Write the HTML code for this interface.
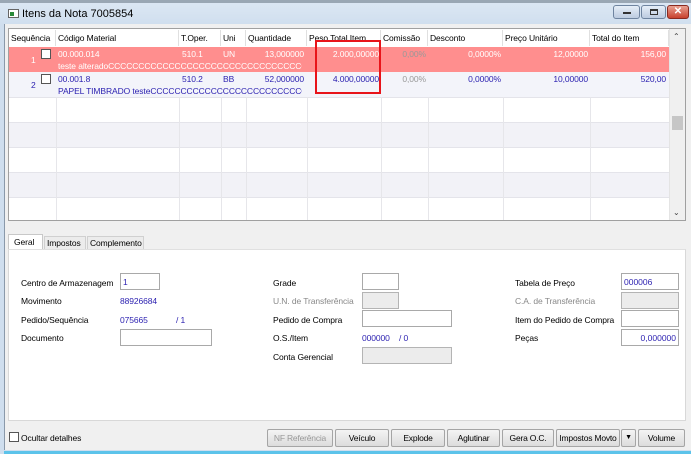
<!DOCTYPE html>
<html><head><meta charset="utf-8"><style>
*{margin:0;padding:0;box-sizing:border-box}
body{width:691px;height:454px;overflow:hidden;background:#cfdcea;font-family:"Liberation Sans",sans-serif;font-size:8.5px;color:#000;position:relative}
.a{position:absolute}
.t{position:absolute;white-space:nowrap;font-size:8.5px;letter-spacing:-0.1px}
.hdr{position:absolute;top:30px;height:16px;border-right:1px solid #e0e0e0;padding:3px 2px;white-space:nowrap;font-size:8.5px;letter-spacing:-0.1px;background:#fff;overflow:hidden}
.vl{position:absolute;width:1px;background:#e6e6ea}
.inp{position:absolute;border:1px solid #a9a9a9;background:#fff;height:17px;font-size:8.5px;color:#2a1fb0;padding:3px 2px;white-space:nowrap}
.dis{background:#ececec;border-color:#b4b4b4}
.btn{position:absolute;top:429px;height:18px;border:1px solid #a5a5a5;background:linear-gradient(#f4f4f4,#dcdcdc);font-size:8.5px;letter-spacing:-0.2px;text-align:center;line-height:16px;border-radius:2px;white-space:nowrap;overflow:hidden}
.blue{color:#2a1fb0}
</style></head><body>
<div class="a" style="left:0;top:0;width:691px;height:454px;background:linear-gradient(#dde8f4,#cfdeee 26px,#cfdeee)"></div>
<div class="a" style="left:0;top:0;width:691px;height:3px;background:#9aa7b4"></div>
<div class="a" style="left:8px;top:9px;width:11px;height:9px;border:1px solid #666;background:#fff"><div class="a" style="left:1px;top:2px;width:4px;height:4px;background:#2a8a3a"></div></div>
<div class="t" style="left:22px;top:8px;font-size:11px;color:#000;letter-spacing:0">Itens da Nota 7005854</div>
<div class="a" style="left:613px;top:5px;width:27px;height:14px;border:1px solid #6f84a0;border-radius:3px;background:linear-gradient(#e6eef8,#bccbe0)"><div class="a" style="left:9px;top:6px;width:8px;height:2px;background:#333"></div></div>
<div class="a" style="left:641px;top:5px;width:25px;height:14px;border:1px solid #6f84a0;border-radius:3px;background:linear-gradient(#e6eef8,#bccbe0)"><div class="a" style="left:8px;top:3px;width:8px;height:6px;border:1px solid #333;border-top-width:2px"></div></div>
<div class="a" style="left:667px;top:5px;width:22px;height:14px;border:1px solid #8a2a20;border-radius:3px;background:linear-gradient(#e8a090,#c8412e);color:#fff;font-weight:bold;font-size:10px;text-align:center;line-height:12px">✕</div>
<div class="a" style="left:4px;top:24px;width:687px;height:426px;background:#f0f0f0;border-left:1px solid #8a99aa"></div>
<div class="a" style="left:8px;top:28px;width:678px;height:193px;border:1px solid #a0a0a0;background:#fff"></div>
<div class="hdr" style="left:9px;width:47px">Sequência</div>
<div class="hdr" style="left:56px;width:123px">Código Material</div>
<div class="hdr" style="left:179px;width:42px">T.Oper.</div>
<div class="hdr" style="left:221px;width:25px">Uni</div>
<div class="hdr" style="left:246px;width:61px">Quantidade</div>
<div class="hdr" style="left:307px;width:74px">Peso Total Item</div>
<div class="hdr" style="left:381px;width:47px">Comissão</div>
<div class="hdr" style="left:428px;width:75px">Desconto</div>
<div class="hdr" style="left:503px;width:87px">Preço Unitário</div>
<div class="hdr" style="left:590px;width:79px">Total do Item</div>
<div class="a" style="left:9px;top:47px;width:660px;height:25px;background:#ff8e8e"></div>
<div class="a" style="left:9px;top:72px;width:660px;height:25px;background:#f3f4fa"></div>
<div class="a" style="left:9px;top:122px;width:660px;height:25px;background:#f2f2f7"></div>
<div class="a" style="left:9px;top:172px;width:660px;height:25px;background:#f2f2f7"></div>
<div class="a" style="left:9px;top:97px;width:660px;height:1px;background:#e4e4ea"></div>
<div class="a" style="left:9px;top:122px;width:660px;height:1px;background:#e4e4ea"></div>
<div class="a" style="left:9px;top:147px;width:660px;height:1px;background:#e4e4ea"></div>
<div class="a" style="left:9px;top:172px;width:660px;height:1px;background:#e4e4ea"></div>
<div class="a" style="left:9px;top:197px;width:660px;height:1px;background:#e4e4ea"></div>
<div class="vl" style="left:56px;top:97px;height:123px"></div>
<div class="vl" style="left:179px;top:97px;height:123px"></div>
<div class="vl" style="left:221px;top:97px;height:123px"></div>
<div class="vl" style="left:246px;top:97px;height:123px"></div>
<div class="vl" style="left:307px;top:97px;height:123px"></div>
<div class="vl" style="left:381px;top:97px;height:123px"></div>
<div class="vl" style="left:428px;top:97px;height:123px"></div>
<div class="vl" style="left:503px;top:97px;height:123px"></div>
<div class="vl" style="left:590px;top:97px;height:123px"></div>
<div style="color:#fff">
<div class="t" style="left:31px;top:55px">1</div>
<div class="a" style="left:41px;top:49px;width:10px;height:10px;border:1px solid #555;background:#fff"></div>
<div class="t" style="left:58px;top:49px">00.000.014</div>
<div class="t" style="left:58px;top:61px;width:244px;overflow:hidden">teste alteradoCCCCCCCCCCCCCCCCCCCCCCCCCCCCCCCCCC</div>
<div class="t" style="left:182px;top:49px">510.1</div>
<div class="t" style="left:223px;top:49px">UN</div>
<div class="t" style="left:246px;top:49px;width:58px;text-align:right">13,000000</div>
<div class="t" style="left:307px;top:49px;width:72px;text-align:right">2.000,00000</div>
<div class="t" style="left:381px;top:49px;width:45px;text-align:right;color:#999">0,00%</div>
<div class="t" style="left:428px;top:49px;width:73px;text-align:right">0,0000%</div>
<div class="t" style="left:503px;top:49px;width:85px;text-align:right">12,00000</div>
<div class="t" style="left:590px;top:49px;width:76px;text-align:right">156,00</div>
</div>
<div class="blue">
<div class="t" style="left:31px;top:80px">2</div>
<div class="a" style="left:41px;top:74px;width:10px;height:10px;border:1px solid #555;background:#fff"></div>
<div class="t" style="left:58px;top:74px">00.001.8</div>
<div class="t" style="left:58px;top:86px;width:244px;overflow:hidden">PAPEL TIMBRADO testeCCCCCCCCCCCCCCCCCCCCCCCCCCCC</div>
<div class="t" style="left:182px;top:74px">510.2</div>
<div class="t" style="left:223px;top:74px">BB</div>
<div class="t" style="left:246px;top:74px;width:58px;text-align:right">52,000000</div>
<div class="t" style="left:307px;top:74px;width:72px;text-align:right">4.000,00000</div>
<div class="t" style="left:381px;top:74px;width:45px;text-align:right;color:#999">0,00%</div>
<div class="t" style="left:428px;top:74px;width:73px;text-align:right">0,0000%</div>
<div class="t" style="left:503px;top:74px;width:85px;text-align:right">10,00000</div>
<div class="t" style="left:590px;top:74px;width:76px;text-align:right">520,00</div>
</div>
<div class="a" style="left:315px;top:40px;width:66px;height:54px;border:2px solid #e8141a"></div>
<div class="a" style="left:669px;top:29px;width:16px;height:191px;background:#f0f0f0;border-left:1px solid #e4e4e4"></div>
<div class="t" style="left:673px;top:32px;font-size:8px;color:#444">⌃</div>
<div class="a" style="left:672px;top:116px;width:11px;height:14px;background:#c6c6c6"></div>
<div class="t" style="left:673px;top:208px;font-size:8px;color:#444">⌄</div>
<div class="a" style="left:8px;top:234px;width:35px;height:16px;background:#fff;border:1px solid #c8c8c8;border-bottom:none"></div>
<div class="t" style="left:14px;top:237px">Geral</div>
<div class="a" style="left:44px;top:236px;width:42px;height:14px;border:1px solid #d0d0d0;background:#ececec"></div>
<div class="t" style="left:47px;top:238px">Impostos</div>
<div class="a" style="left:87px;top:236px;width:57px;height:14px;border:1px solid #d0d0d0;background:#ececec"></div>
<div class="t" style="left:90px;top:238px">Complemento</div>
<div class="a" style="left:8px;top:249px;width:678px;height:172px;background:#fff;border:1px solid #d8d8d8;border-top:1px solid #e0e0e0"></div>
<div class="t" style="left:21px;top:278px">Centro de Armazenagem</div>
<div class="inp" style="left:120px;top:273px;width:40px">1</div>
<div class="t" style="left:21px;top:296px">Movimento</div>
<div class="t blue" style="left:120px;top:296px">88926684</div>
<div class="t" style="left:21px;top:315px">Pedido/Sequência</div>
<div class="t blue" style="left:120px;top:315px">075665</div>
<div class="t blue" style="left:176px;top:315px">/ 1</div>
<div class="t" style="left:21px;top:333px">Documento</div>
<div class="inp" style="left:120px;top:329px;width:92px"></div>
<div class="t" style="left:273px;top:278px">Grade</div>
<div class="inp" style="left:362px;top:273px;width:37px"></div>
<div class="t" style="left:273px;top:296px;color:#888">U.N. de Transferência</div>
<div class="inp dis" style="left:362px;top:292px;width:37px"></div>
<div class="t" style="left:273px;top:315px">Pedido de Compra</div>
<div class="inp" style="left:362px;top:310px;width:90px"></div>
<div class="t" style="left:273px;top:333px">O.S./Item</div>
<div class="t blue" style="left:362px;top:333px">000000</div>
<div class="t blue" style="left:399px;top:333px">/ 0</div>
<div class="t" style="left:273px;top:352px">Conta Gerencial</div>
<div class="inp dis" style="left:362px;top:347px;width:90px"></div>
<div class="t" style="left:515px;top:278px">Tabela de Preço</div>
<div class="inp" style="left:621px;top:273px;width:58px">000006</div>
<div class="t" style="left:515px;top:296px;color:#888">C.A. de Transferência</div>
<div class="inp dis" style="left:621px;top:292px;width:58px"></div>
<div class="t" style="left:515px;top:315px">Item do Pedido de Compra</div>
<div class="inp" style="left:621px;top:310px;width:58px"></div>
<div class="t" style="left:515px;top:333px">Peças</div>
<div class="inp" style="left:621px;top:329px;width:58px;text-align:right">0,000000</div>
<div class="a" style="left:9px;top:432px;width:10px;height:10px;border:1px solid #555;background:#fff"></div>
<div class="t" style="left:21px;top:433px">Ocultar detalhes</div>
<div class="btn" style="left:267px;width:66px;color:#999">NF Referência</div>
<div class="btn" style="left:335px;width:54px">Veículo</div>
<div class="btn" style="left:391px;width:54px">Explode</div>
<div class="btn" style="left:447px;width:53px">Aglutinar</div>
<div class="btn" style="left:502px;width:52px">Gera O.C.</div>
<div class="btn" style="left:556px;width:64px">Impostos Movto</div>
<div class="btn" style="left:621px;width:15px;font-size:7px">▼</div>
<div class="btn" style="left:638px;width:47px">Volume</div>
<div class="a" style="left:4px;top:451px;width:687px;height:3px;background:#5cc3ea"></div>
</body></html>
